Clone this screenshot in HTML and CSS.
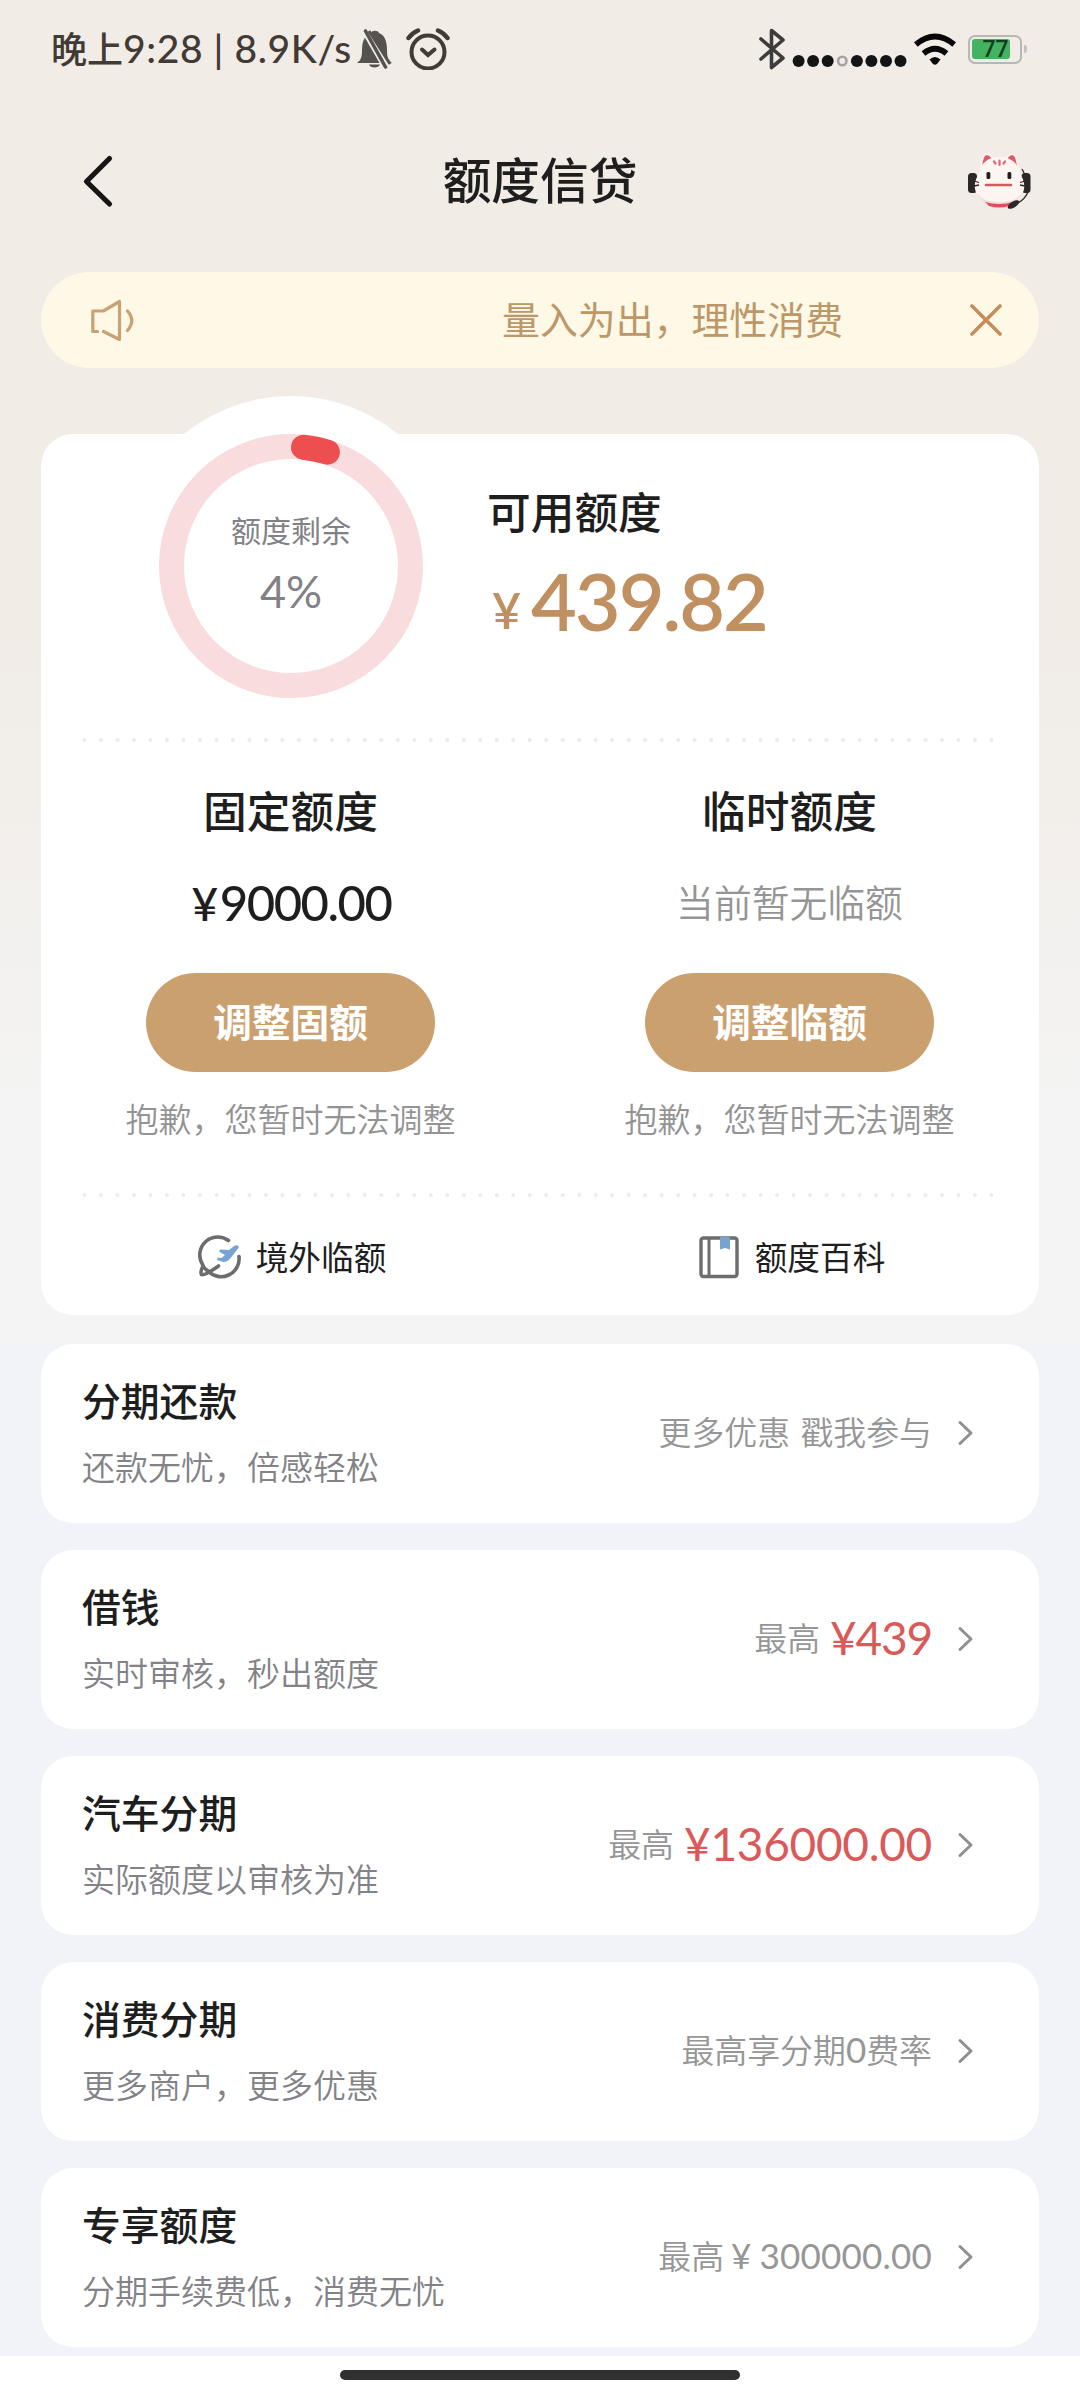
FILE: index.html
```html
<!DOCTYPE html>
<html lang="zh-CN">
<head>
<meta charset="utf-8">
<title>额度信贷</title>
<link rel="stylesheet" href="styles.css">
</head>
<body>
<div class="app">
  <div class="status">
    <div class="status-left">
      <span class="status-text">晚上<span class="num">9:28 | 8.9K/s</span></span>
      <svg class="bell" width="40" height="40" viewBox="0 0 40 40"><path d="M2 34c4-3 5-6 5-13C7 11 11 5 16 4c1-3 7-3 8 0 5 2 8 7 8 17 0 7 1 10 5 13z" fill="#555350"/><path d="M14 35.500h11c-1 4-10 4-11 0z" fill="#555350"/><path d="M9 -1l23 40" stroke="#f1ece6" stroke-width="8"/><path d="M10.500 2l20 36" stroke="#555350" stroke-width="3.600" stroke-linecap="round"/><path d="M14 2l21 33" stroke="#555350" stroke-width="3"/></svg>
      <svg class="alarm" width="44" height="42" viewBox="0 0 44 42"><g fill="none" stroke="#423b36" stroke-linecap="round"><circle cx="22" cy="24" r="16.500" stroke-width="4"/><path d="M2.500 10Q6 5 12 2.500M41.500 10Q38 5 32 2.500" stroke-width="4.500"/><path d="M16 21.500l6 5.500 6.500-5.500" stroke-width="4"/></g></svg>
    </div>
    <div class="status-right">
      <svg width="26" height="42" viewBox="0 0 26 42"><path d="M2 11l22 19-11.500 9.500V2.500L24 12 2 31" fill="none" stroke="#3e3d3c" stroke-width="3.600" stroke-linejoin="round" stroke-linecap="round"/></svg>
      <svg class="dots" width="116" height="14" viewBox="0 0 116 14"><g fill="#141414"><circle cx="6.600" cy="7" r="6"/><circle cx="21.100" cy="7" r="6"/><circle cx="35.700" cy="7" r="6"/><circle cx="64.900" cy="7" r="6"/><circle cx="79.400" cy="7" r="6"/><circle cx="94" cy="7" r="6"/><circle cx="108.500" cy="7" r="6"/></g><circle cx="50.300" cy="7" r="4.200" fill="none" stroke="#a5a3a1" stroke-width="2.600"/></svg>
      <svg class="wifi" width="42" height="32" viewBox="0 0 42 32"><g fill="none" stroke="#080808" stroke-width="5.800"><path d="M1.800 11.500Q21-4.500 40.200 11.500"/><path d="M9.500 20.500Q21 11 32.500 20.500"/></g><path d="M15.500 26.500q5.500-5 11 0l-3.500 4.500q-2 1.500-4 0z" fill="#080808"/></svg>
      <div class="battery"><span class="battery-fill"></span><span class="battery-text">77</span></div>
      <i class="nub"></i>
    </div>
  </div>

  <header class="nav">
    <svg class="back" width="32" height="54" viewBox="0 0 32 54"><path d="M27.500 4.500L4.500 27.500l23 22.500" fill="none" stroke="#181614" stroke-width="5.200" stroke-linecap="round" stroke-linejoin="round"/></svg>
    <h1>额度信贷</h1>
    <svg class="mascot" width="64" height="56" viewBox="0 0 64 56">
      <rect x="0" y="20" width="9" height="20" rx="3.500" fill="#2c2827"/><rect x="53.500" y="20" width="9" height="20" rx="3.500" fill="#2c2827"/>
      <path d="M13 15Q14 1 19 1q5 1 8 9zM50 15Q49 1 44 1q-5 1-8 9z" fill="#e45767" stroke="#fdf3f0" stroke-width="2"/>
      <path d="M31.500 4C20 4 13 10 12 19 8 25 6 30 7 36c2 12 12 17 24 17s23-5 25-17c1-6-1-11-5-17C50 10 43 4 31.500 4z" fill="#fdf5f2"/>
      <path d="M8 39c4 11 12 14 23 14s21-4 24-14c-6 8-14 10-24 10S14 47 8 39z" fill="#f3dfdb"/>
      <path d="M17 49q14 4 28 0l-4 4q-10 3-20 0z" fill="#d9535f"/>
      <path d="M31.500 7.500v4.500M26 8.500l1.500 2M37 8.500l-1.500 2" stroke="#dd6b76" stroke-width="2.200" stroke-linecap="round"/>
      <rect x="18.500" y="19" width="3.800" height="7" rx="1.500" fill="#211d1d"/><rect x="39.500" y="19" width="3.800" height="7" rx="1.500" fill="#211d1d"/>
      <path d="M18 32h25" stroke="#d25b5d" stroke-width="2.600" stroke-linecap="round"/>
      <path d="M6 28l5 1.500M6 33l5-1M57 28l-5 1.500M57 33l-5-1M54 16l3 6M60 39q-3 7-10 11" stroke="#2c2827" stroke-width="1.300" fill="none"/>
      <ellipse cx="45.500" cy="51.500" rx="6.500" ry="3" transform="rotate(-32 45.500 51.500)" fill="#2c2827"/>
    </svg>
  </header>

  <div class="notice">
    <svg class="speaker" width="48" height="44" viewBox="0 0 48 44"><path d="M8.500 33.500H3.800V13h10.500L30.500 3.500v38L14.500 33.500" fill="none" stroke="#c9a273" stroke-width="3.200" stroke-linejoin="round" stroke-linecap="round"/><path d="M38.500 13q8.500 9.500 0 19.500" fill="none" stroke="#c9a273" stroke-width="3.200" stroke-linecap="round"/></svg>
    <span class="notice-text">量入为出，理性消费</span>
    <svg class="close" width="32" height="32" viewBox="0 0 32 32"><path d="M2 2l28 28M30 2L2 30" stroke="#c38e58" stroke-width="3.600" stroke-linecap="round"/></svg>
  </div>

  <section class="card quota">
    <div class="quota-top">
      <div class="ring">
        <svg width="340" height="340" viewBox="0 0 340 340"><circle cx="170" cy="170" r="170" fill="#fff"/><circle cx="170" cy="170" r="119.500" fill="none" stroke="#f9dcdd" stroke-width="25"/><path d="M182.500 51.200A119.500 119.500 0 0 1 206.400 56.200" fill="none" stroke="#ed4f50" stroke-width="25" stroke-linecap="round"/></svg>
        <div class="ring-label"><span>额度剩余</span><b>4%</b></div>
      </div>
      <div class="available"><h2>可用额度</h2><div class="amount"><small>¥</small><span>439.82</span></div></div>
    </div>
    <svg class="dotline" width="912" height="6" viewBox="0 0 912 6"><path d="M2.500 3H912" stroke="#ececec" stroke-width="4" stroke-linecap="round" stroke-dasharray="0 16.490"/></svg>
    <div class="columns">
      <div class="col"><h2>固定额度</h2><p class="fixed"><i>¥</i>9000.00</p><button>调整固额</button><p class="sorry">抱歉，您暂时无法调整</p></div>
      <div class="col"><h2>临时额度</h2><p class="temp">当前暂无临额</p><button>调整临额</button><p class="sorry">抱歉，您暂时无法调整</p></div>
    </div>
    <svg class="dotline" width="912" height="6" viewBox="0 0 912 6"><path d="M2.500 3H912" stroke="#ececec" stroke-width="4" stroke-linecap="round" stroke-dasharray="0 16.490"/></svg>
    <div class="links">
      <a><svg width="44" height="44" viewBox="0 0 44 44"><g fill="none" stroke="#6c6c6c" stroke-width="3.600" stroke-linecap="round"><path d="M30.500 5.500A18 18 0 0 0 4.500 29.500Q6 34 10 36"/><path d="M41 21.500A18 18 0 0 1 10 36"/><path d="M5 31q-3 6-1.500 8.500 3 1.500 17-8.500"/></g><path d="M40 10.500q-2-1-4.500 1L31 15l-9-.5-1 2 6 3.500-3.500 3-4-.5-.5 2.500 6.500 2q4 0 7.500-4.500L40.500 13q1-1.500-.5-2.500z" fill="#78a3d3"/></svg><span>境外临额</span></a>
      <a><svg width="44" height="44" viewBox="0 0 44 44"><rect x="4" y="3" width="36" height="38.500" rx="2.500" fill="none" stroke="#6c6c6c" stroke-width="3.400"/><path d="M12 3v38" stroke="#6c6c6c" stroke-width="3"/><path d="M23 2h10v12.500l-5-1.500-5 1.500z" fill="#78a3cf"/></svg><span>额度百科</span></a>
    </div>
  </section>

  <main class="list">
    <section class="card row"><div class="row-main"><h3>分期还款</h3><p>还款无忧，倍感轻松</p></div><div class="row-side"><span class="wide">更多优惠 戳我参与</span><svg class="chev" width="18" height="26" viewBox="0 0 18 26"><path d="M3 2.500L14 13 3 23.500" /></svg></div></section>
    <section class="card row"><div class="row-main"><h3>借钱</h3><p>实时审核，秒出额度</p></div><div class="row-side"><span>最高</span><em>¥439</em><svg class="chev" width="18" height="26" viewBox="0 0 18 26"><path d="M3 2.500L14 13 3 23.500" /></svg></div></section>
    <section class="card row"><div class="row-main"><h3>汽车分期</h3><p>实际额度以审核为准</p></div><div class="row-side"><span>最高</span><em class="long">¥136000.00</em><svg class="chev" width="18" height="26" viewBox="0 0 18 26"><path d="M3 2.500L14 13 3 23.500" /></svg></div></section>
    <section class="card row"><div class="row-main"><h3>消费分期</h3><p>更多商户，更多优惠</p></div><div class="row-side"><span>最高享分期<span class="num zero">0</span>费率</span><svg class="chev" width="18" height="26" viewBox="0 0 18 26"><path d="M3 2.500L14 13 3 23.500" /></svg></div></section>
    <section class="card row"><div class="row-main"><h3>专享额度</h3><p>分期手续费低，消费无忧</p></div><div class="row-side"><span>最高<span class="num limit"><i>¥</i>300000.00</span></span><svg class="chev" width="18" height="26" viewBox="0 0 18 26"><path d="M3 2.500L14 13 3 23.500" /></svg></div></section>
  </main>
  <footer class="home"><i></i></footer>
</div>
</body>
</html>
```
FILE: styles.css
```css
* { box-sizing: border-box; margin: 0; padding: 0; }
body {
  width: 1080px;
  height: 2400px;
  overflow: hidden;
  font-family: "Noto Sans CJK SC", sans-serif;
  color: #1e1e1e;
}
svg { display: block; flex: none; }
i, em { font-style: normal; }
.app {
  height: 2400px;
  display: flex;
  flex-direction: column;
  background: linear-gradient(#f1ece6 0, #f1ece6 640px, #f4f4f4 1120px, #f4f4f4 1344px, #f2f3f8 1344px);
}
.num { font-family: Lato, "Noto Sans CJK SC", sans-serif; font-weight: 400; }

.status {
  height: 98px;
  padding: 0 53px 0 51px;
  display: flex;
  justify-content: space-between;
  align-items: center;
}
.status-left, .status-right { display: flex; align-items: center; }
.status-text { width: 304px; white-space: nowrap; font-size: 36px; font-weight: 500; color: #413a35; line-height: 50px; padding-bottom: 3px; }
.status-text .num { font-size: 39px; letter-spacing: .6px; font-weight: 500; }
.alarm { margin-left: 11px; }
.dots { margin: 24px 0 0 7px; }
.wifi { margin-left: 6px; }
.battery {
  position: relative;
  width: 54px;
  height: 29px;
  margin-left: 12px;
  border: 2.5px solid #b7b6b8;
  border-radius: 7px;
  padding: 2px;
}
.battery-fill { display: block; width: 38px; height: 20px; border-radius: 3px; background: #43b35f; }
.battery-text {
  position: absolute;
  inset: 0 0 0 1px;
  text-align: center;
  font: 500 23px/25px Roboto, sans-serif;
  color: #123d1e;
}
.nub { width: 3px; height: 8px; margin-left: 2px; border-radius: 0 3px 3px 0; background: #c4c2c1; }

.nav {
  height: 174px;
  padding: 0 48px 8px 82px;
  display: grid;
  grid-template-columns: 64px 1fr 64px;
  align-items: center;
}
.nav h1 { text-align: center; font-size: 48.7px; font-weight: 500; line-height: 70px; padding: 0 34px 6px 0; }

.notice {
  height: 96px;
  margin: 0 41px;
  padding: 0 37px 0 48px;
  border-radius: 48px;
  background: #fef8e7;
  display: flex;
  align-items: center;
}
.notice-text { margin-left: 365px; margin-right: auto; font-size: 37.900px; color: #bc9768; padding-bottom: 5px; }

.card { background: #fff; border-radius: 32px; margin: 0 41px; }
.quota { margin-top: 66px; height: 881px; flex: none; }
.quota-top { height: 303px; display: flex; }
.ring { position: relative; width: 340px; height: 340px; margin: -38px 0 0 80px; flex: none; }
.ring-label {
  position: absolute;
  inset: 0;
  display: flex;
  flex-direction: column;
  align-items: center;
  padding-top: 111px;
  color: #818186;
}
.ring-label span { font-size: 30px; line-height: 44px; }
.ring-label b { font: 400 45px/54px Lato, sans-serif; margin-top: 13px; }
.available { padding: 44px 0 0 26px; }
.quota h2 { font-size: 43.700px; line-height: 64px; font-weight: 500; }
.amount { display: flex; align-items: baseline; margin-top: 12px; padding-left: 5px; font: 600 79px/94px Lato, sans-serif; color: #c09060; }
.amount small { font-size: 50px; width: 39px; position: relative; top: -2px; }
.amount span { letter-spacing: -2px; }
.dotline { margin-left: 41px; }
.columns { display: grid; grid-template-columns: 1fr 1fr; height: 449px; }
.col { display: flex; flex-direction: column; align-items: center; padding-top: 34px; }
.fixed, .temp { height: 58px; margin-top: 31px; line-height: 58px; }
.fixed { font-family: Lato, sans-serif; font-size: 49px; font-weight: 500; letter-spacing: -1.500px; padding: 1px 0 0 2px; }
.fixed i { font-size: 46px; margin-right: 3px; }
.temp { font-size: 37.800px; font-weight: 350; color: #959595; }
.col button {
  width: 289px;
  height: 99px;
  margin-top: 43px;
  padding-bottom: 4px;
  border: 0;
  border-radius: 50px;
  background: #cba06f;
  color: #fff;
  font: 700 38.700px/95px "Noto Sans CJK SC", sans-serif;
}
.sorry { font-size: 33px; line-height: 48px; margin-top: 22px; font-weight: 350; color: #939393; }
.links { display: grid; grid-template-columns: 1fr 1fr; height: 116px; }
.links a { display: flex; justify-content: center; align-items: center; gap: 14px; font-size: 32.700px; padding: 1px 0 0 3px; }
.links span { padding-bottom: 3px; }

.list { display: flex; flex-direction: column; gap: 27px; margin-top: 29px; }
.row { height: 179px; flex: none; padding: 0 64px 0 41px; display: flex; justify-content: space-between; }
.row-main { padding-top: 27px; }
.row h3 { font-size: 38.800px; font-weight: 500; line-height: 56px; }
.row p { font-size: 33px; line-height: 48px; margin-top: 15px; color: #828287; font-weight: 350; }
.row-side { display: flex; align-items: center; font-size: 32.900px; color: #969696; font-weight: 350; padding-bottom: 7px; }
.row-side .wide { word-spacing: 3px; }
.row-side em { font-family: Lato, sans-serif; font-weight: 400; font-size: 46px; color: #d95a59; margin-left: 10px; letter-spacing: -1.200px; padding-top: 2px; }
.row-side em.long { letter-spacing: -.3px; }
.chev { margin: 5px 0 0 25px; fill: none; stroke: #8f8f8f; stroke-width: 3; stroke-linecap: round; stroke-linejoin: round; }
.zero { font-size: 35px; }
.row-side .limit { font-size: 35px; letter-spacing: .2px; }
.limit i { margin: 0 8px 0 7px; }
.home { height: 44px; margin-top: auto; background: #fff; display: flex; justify-content: center; padding-top: 14px; }
.home i { width: 400px; height: 10px; border-radius: 5px; background: #303030; }
```
